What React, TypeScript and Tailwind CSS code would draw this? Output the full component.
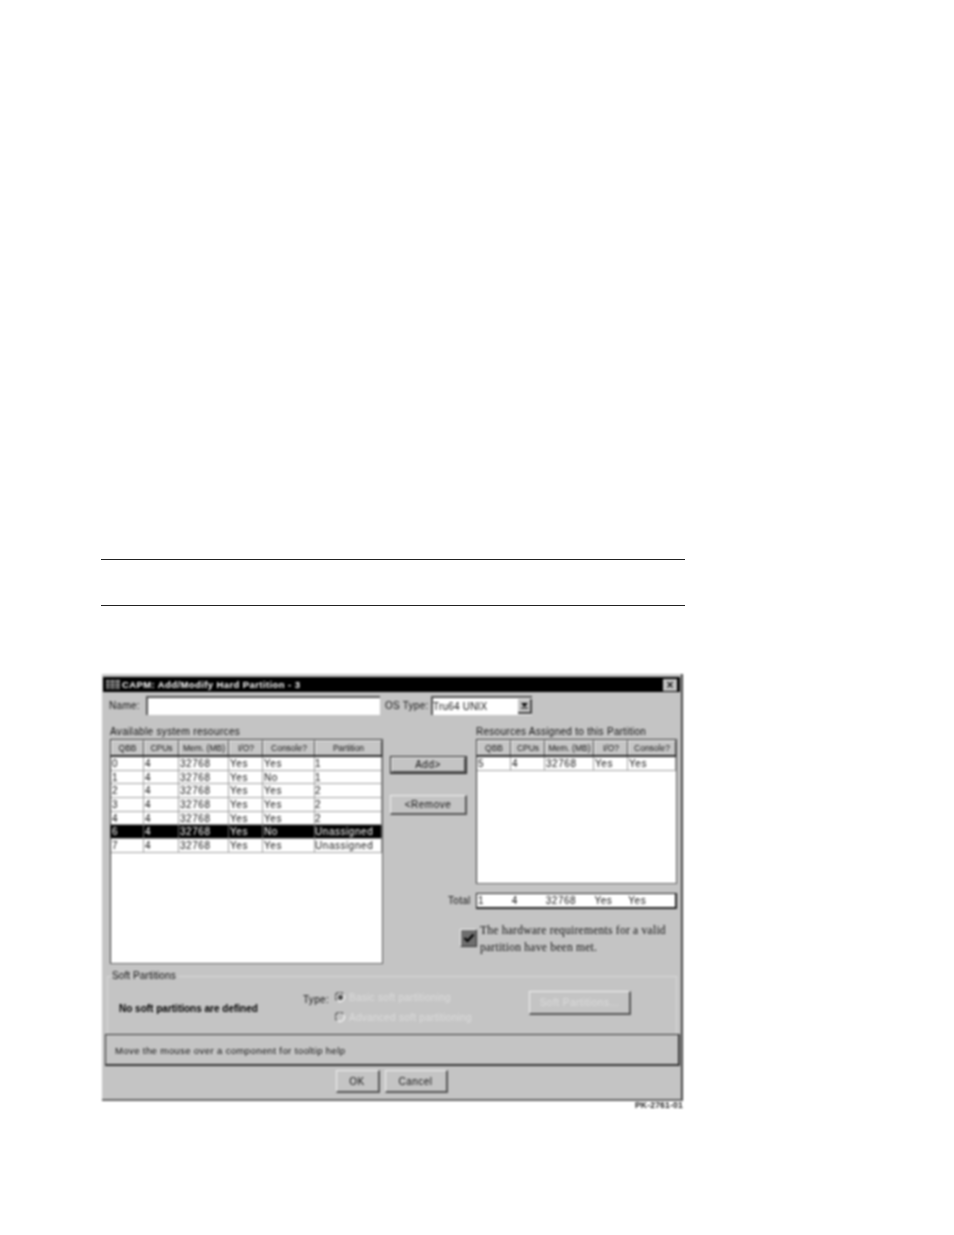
const sans = "font-['Liberation_Sans',Arial,sans-serif]";

const leftCols = [33, 35, 50, 34, 52, 67];
const rightCols = [34, 34, 49, 34, 48];
const leftHead = ["QBB", "CPUs", "Mem. (MB)", "I/O?", "Console?", "Partition"];
const rightHead = ["QBB", "CPUs", "Mem. (MB)", "I/O?", "Console?"];
const leftRows = [
  ["0", "4", "32768", "Yes", "Yes", "1"],
  ["1", "4", "32768", "Yes", "No", "1"],
  ["2", "4", "32768", "Yes", "Yes", "2"],
  ["3", "4", "32768", "Yes", "Yes", "2"],
  ["4", "4", "32768", "Yes", "Yes", "2"],
  ["6", "4", "32768", "Yes", "No", "Unassigned"],
  ["7", "4", "32768", "Yes", "Yes", "Unassigned"],
];

function Header({ cols, labels }: { cols: number[]; labels: string[] }) {
  return (
    <div className="flex h-[17px] border-b-2 border-[#2a2a2a] bg-[#c6c6c6]">
      {labels.map((l, i) => (
        <div
          key={l}
          style={{ width: cols[i] }}
          className="flex items-center justify-center border-t border-l border-t-[#f4f4f4] border-l-[#f4f4f4] border-r border-r-[#444] text-[8.5px] whitespace-nowrap text-[#111]"
        >
          {l}
        </div>
      ))}
    </div>
  );
}

function Row({ cols, cells, selected }: { cols: number[]; cells: string[]; selected?: boolean }) {
  return (
    <div className={`flex h-[13.7px] border-b border-[#a0a0a0] ${selected ? "bg-black text-white" : "bg-white text-[#111]"}`}>
      {cells.map((c, i) => (
        <div
          key={i}
          style={{ width: cols[i] }}
          className={`text-[10px] leading-[13px] tracking-[0.55px] whitespace-nowrap overflow-hidden border-r ${i === 5 ? "pl-0" : "pl-[1px]"} ${selected ? "border-[#666]" : "border-[#a0a0a0]"}`}
        >
          {c}
        </div>
      ))}
    </div>
  );
}

function RaisedButton({ children, w, h, disabled }: { children: React.ReactNode; w: number; h: number; disabled?: boolean }) {
  return (
    <div
      style={{ width: w, height: h }}
      className={`flex items-center justify-center border border-t-[#f0f0f0] border-l-[#f0f0f0] border-r-2 border-b-2 border-r-[#555] border-b-[#555] text-[10px] tracking-[0.5px] ${disabled ? "text-[#dcdcdc]" : "text-[#111]"}`}
    >
      {children}
    </div>
  );
}

function Radio({ filled }: { filled?: boolean }) {
  return (
    <svg width="11" height="11" viewBox="0 0 11 11" className="shrink-0">
      <path d="M1.5 8 A4.5 4.5 0 0 1 8 1.5" fill="none" stroke="#555" strokeWidth="1.4" />
      <path d="M9 3 A4.5 4.5 0 0 1 3 9" fill="none" stroke="#f4f4f4" strokeWidth="1.4" />
      {filled && <circle cx="5.5" cy="5.5" r="2.4" fill="#444" />}
    </svg>
  );
}

export default function App() {
  return (
    <div className={`min-h-[1235px] bg-white pt-[559px] ${sans}`}>
      <div className="ml-[101px] h-px w-[584px] bg-[#222]" />
      <div className="ml-[101px] mt-[45px] h-px w-[584px] bg-[#222]" />

      <div className="mt-[68px] ml-[102px] flex h-[427px] w-[581px] flex-col border-r-2 border-b-2 border-r-[#444] border-b-[#666] bg-[#c4c4c4] pt-[3px] blur-[0.8px]">
        {/* title bar */}
        <div className="mx-[1px] flex h-[15px] shrink-0 items-center bg-black pl-[3px] pr-[3px]">
          <svg width="14" height="11" viewBox="0 0 14 11" className="shrink-0">
            <rect x="0" y="1" width="14" height="9" fill="#a0a0a0" />
            <path d="M0 3.5h14M0 6h14M0 8.5h14M4 1v9M9 1v9" stroke="#000" strokeWidth="0.8" />
          </svg>
          <span className="ml-[2px] pt-[1px] text-[9.5px] font-bold tracking-[0.4px] text-white">CAPM: Add/Modify Hard Partition - 3</span>
          <div className="ml-auto flex h-[12px] w-[14px] items-center justify-center bg-[#c4c4c4] text-[12px] font-bold leading-none text-[#111]">×</div>
        </div>

        {/* name row */}
        <div className="mt-[4px] flex h-[19px] shrink-0 items-center pl-[7px]">
          <span className="w-[37px] text-[10px] tracking-[0.3px] text-[#111]">Name:</span>
          <div className="h-[19px] w-[234px] border-t-2 border-l-2 border-t-[#555] border-l-[#555] bg-white" />
          <span className="ml-[5px] w-[46px] text-[10px] tracking-[0.25px] text-[#111] whitespace-nowrap">OS Type:</span>
          <div className="flex h-[19px] w-[101px] items-center border-t-2 border-l-2 border-t-[#555] border-l-[#555] bg-white">
            <span className="text-[10px] tracking-[0.2px] text-[#111] whitespace-nowrap">Tru64 UNIX</span>
            <div className="mt-[-1px] ml-auto flex h-[15px] w-[14px] items-center justify-center border-r-2 border-b-2 border-r-[#444] border-b-[#444] bg-[#c4c4c4]">
              <svg width="7" height="7" viewBox="0 0 7 7"><path d="M0 1h7L3.5 5z" fill="#000" /><rect y="5.5" width="7" height="1" fill="#000" /></svg>
            </div>
          </div>
        </div>

        {/* main columns */}
        <div className="mt-[11px] flex h-[245px] shrink-0 pl-[8px]">
          <div className="w-[273px] shrink-0">
            <div className="h-[13px] text-[10px] leading-[12px] tracking-[0.33px] whitespace-nowrap text-[#111]">Available system resources</div>
            <div className="h-[225px] border border-t-[#333] border-l-[#333] border-r-[#555] border-b-[#666] bg-white">
              <Header cols={leftCols} labels={leftHead} />
              {leftRows.map((r, i) => (
                <Row key={i} cols={leftCols} cells={r} selected={i === 5} />
              ))}
            </div>
          </div>

          <div className="ml-[7px] flex w-[77px] shrink-0 flex-col pt-[30px]">
            <div className="border border-[#222]">
              <RaisedButton w={75} h={16}>Add&gt;</RaisedButton>
            </div>
            <div className="mt-[21px]">
              <RaisedButton w={77} h={20}>&lt;Remove</RaisedButton>
            </div>
          </div>

          <div className="ml-[9px] w-[201px] shrink-0">
            <div className="h-[13px] text-[10px] leading-[12px] tracking-[0.28px] whitespace-nowrap text-[#111]">Resources Assigned to this Partition</div>
            <div className="h-[145px] border border-t-[#333] border-l-[#333] border-r-[#555] border-b-[#666] bg-white">
              <Header cols={rightCols} labels={rightHead} />
              <Row cols={rightCols} cells={["5", "4", "32768", "Yes", "Yes"]} />
            </div>
            <div className="relative mt-[9px] h-[16px] border border-[#222] border-r-2 border-b-2 bg-white">
              <span className="absolute top-[-1px] left-[-29px] text-[10px] tracking-[0.3px] text-[#111]">Total</span>
              <div className="flex">
                {["1", "4", "32768", "Yes", "Yes"].map((c, i) => (
                  <div key={i} style={{ width: rightCols[i] }} className="pl-[1px] text-[10px] leading-[13px] tracking-[0.55px] text-[#111]">{c}</div>
                ))}
              </div>
            </div>
          </div>
        </div>

        {/* requirements (checkbox overlaps into soft partitions gap) */}
        <div className="relative h-0">
          <div className="absolute top-[-49px] left-[358px] flex items-start">
            <div className="mt-[7px] flex h-[18px] w-[17px] items-center justify-center border border-t-[#f4f4f4] border-l-[#f4f4f4] border-r-[#333] border-b-[#333] bg-[#6e6e6e]">
              <svg width="12" height="10" viewBox="0 0 12 10"><path d="M1.5 5l3 3 6-6.5" fill="none" stroke="#000" strokeWidth="2.2" /></svg>
            </div>
            <div className="ml-[3px] font-['Liberation_Serif',serif] text-[11.5px] leading-[17px] tracking-[0.25px] whitespace-nowrap text-[#111]">
              The hardware requirements for a valid<br />partition have been met.
            </div>
          </div>
        </div>

        {/* soft partitions */}
        <div className="relative mt-[5px] ml-[5px] flex h-[58px] w-[570px] shrink-0 items-center border-t border-l border-r border-[#d8d8d8]">
          <span className="absolute top-[-7px] left-[4px] bg-[#c4c4c4] pr-[2px] text-[10px] leading-[12px] tracking-[0.1px] text-[#111]">Soft Partitions</span>
          <span className="mt-[6px] ml-[11px] w-[184px] text-[10px] font-bold whitespace-nowrap text-black">No soft partitions are defined</span>
          <span className="mb-[13px] text-[10px] tracking-[0.3px] text-[#111]">Type:</span>
          <div className="mt-[4px] ml-[6px] flex w-[194px] flex-col gap-[5px]">
            <div className="flex items-center gap-[3px] text-[10px] tracking-[0.3px] text-[#dcdcdc] whitespace-nowrap"><Radio filled />Basic soft partitioning</div>
            <div className="flex items-center gap-[3px] text-[10px] tracking-[0.3px] text-[#dcdcdc] whitespace-nowrap"><Radio />Advanced soft partitioning</div>
          </div>
          <div className="mb-[5px]">
            <RaisedButton w={102} h={24} disabled>Soft Partitions...</RaisedButton>
          </div>
        </div>

        {/* status */}
        <div className="mx-[3px] flex h-[32px] w-[575px] shrink-0 items-center border border-[#333] border-b-2 border-r-2 pt-[3px] pl-[9px] text-[9.5px] tracking-[0.4px] text-[#111]">
          Move the mouse over a component for tooltip help
        </div>

        {/* buttons */}
        <div className="mt-[4px] flex shrink-0 justify-center gap-[5px]">
          <RaisedButton w={44} h={23}>OK</RaisedButton>
          <RaisedButton w={63} h={23}>Cancel</RaisedButton>
        </div>
      </div>

      <div className="mt-[-2px] ml-[635px] w-[50px] text-[8.5px] leading-[12px] font-bold tracking-[0.2px] whitespace-nowrap text-[#222] blur-[0.8px]">PK-2761-01</div>
    </div>
  );
}
